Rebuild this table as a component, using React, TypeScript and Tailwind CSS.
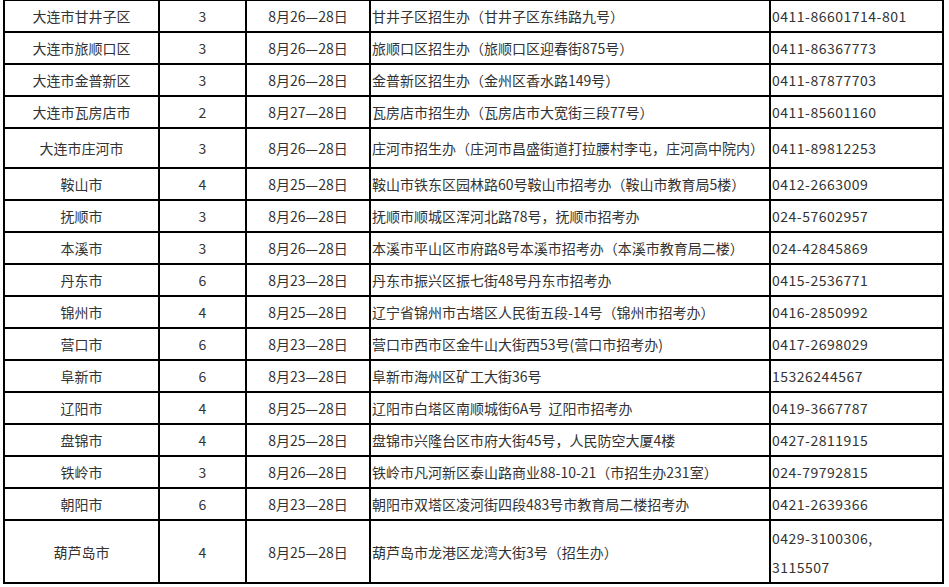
import React from "react";

type Row = [string, string, string, string, React.ReactNode, number];

const rows: Row[] = [
  ["大连市甘井子区", "3", "8月26—28日", "甘井子区招生办（甘井子区东纬路九号）", "0411-86601714-801", 32],
  ["大连市旅顺口区", "3", "8月26—28日", "旅顺口区招生办（旅顺口区迎春街875号）", "0411-86367773", 32],
  ["大连市金普新区", "3", "8月26—28日", "金普新区招生办（金州区香水路149号）", "0411-87877703", 32],
  ["大连市瓦房店市", "2", "8月27—28日", "瓦房店市招生办（瓦房店市大宽街三段77号）", "0411-85601160", 32],
  ["大连市庄河市", "3", "8月26—28日", "庄河市招生办（庄河市昌盛街道打拉腰村李屯，庄河高中院内）", "0411-89812253", 40],
  ["鞍山市", "4", "8月25—28日", "鞍山市铁东区园林路60号鞍山市招考办（鞍山市教育局5楼）", "0412-2663009", 32],
  ["抚顺市", "3", "8月26—28日", "抚顺市顺城区浑河北路78号，抚顺市招考办", "024-57602957", 32],
  ["本溪市", "3", "8月26—28日", "本溪市平山区市府路8号本溪市招考办（本溪市教育局二楼）", "024-42845869", 32],
  ["丹东市", "6", "8月23—28日", "丹东市振兴区振七街48号丹东市招考办", "0415-2536771", 32],
  ["锦州市", "4", "8月25—28日", "辽宁省锦州市古塔区人民街五段-14号（锦州市招考办）", "0416-2850992", 32],
  ["营口市", "6", "8月23—28日", "营口市西市区金牛山大街西53号(营口市招考办)", "0417-2698029", 32],
  ["阜新市", "6", "8月23—28日", "阜新市海州区矿工大街36号", "15326244567", 32],
  ["辽阳市", "4", "8月25—28日", "辽阳市白塔区南顺城街6A号\u00a0\u00a0辽阳市招考办", "0419-3667787", 32],
  ["盘锦市", "4", "8月25—28日", "盘锦市兴隆台区市府大街45号，人民防空大厦4楼", "0427-2811915", 32],
  ["铁岭市", "3", "8月26—28日", "铁岭市凡河新区泰山路商业88-10-21（市招生办231室）", "024-79792815", 32],
  ["朝阳市", "6", "8月23—28日", "朝阳市双塔区凌河街四段483号市教育局二楼招考办", "0421-2639366", 32],
  [
    "葫芦岛市",
    "4",
    "8月25—28日",
    "葫芦岛市龙港区龙湾大街3号（招生办）",
    <div className="leading-[29px] pt-[3px]">
      0429-3100306,
      <br />
      3115507
    </div>,
    61,
  ],
];

export default function App() {
  return (
    <div className="bg-white w-[949px] h-[587px] overflow-hidden">
      <table
        className="table-fixed border-collapse w-[939px] ml-[3px] -mt-[1px] text-[14px] text-[#333333] leading-[20px]"
        style={{ fontFamily: '"Noto Sans CJK SC", "Noto Sans", sans-serif' }}
      >
        <colgroup>
          <col className="w-[155px]" />
          <col className="w-[87px]" />
          <col className="w-[124px]" />
          <col className="w-[400px]" />
          <col className="w-[173px]" />
        </colgroup>
        <tbody>
          {rows.map((r, i) => (
            <tr key={i} style={{ height: r[5] }}>
              <td className="border-2 border-black text-center p-0 align-middle whitespace-nowrap">{r[0]}</td>
              <td className="border-2 border-black text-center p-0 align-middle">{r[1]}</td>
              <td className="border-2 border-black text-center p-0 align-middle whitespace-nowrap">{r[2]}</td>
              <td className="border-2 border-black text-left px-[1px] py-0 align-middle whitespace-nowrap">{r[3]}</td>
              <td className="border-2 border-black text-left px-[1px] py-0 align-middle whitespace-nowrap tracking-[0.5px]">{r[4]}</td>
            </tr>
          ))}
        </tbody>
      </table>
    </div>
  );
}
